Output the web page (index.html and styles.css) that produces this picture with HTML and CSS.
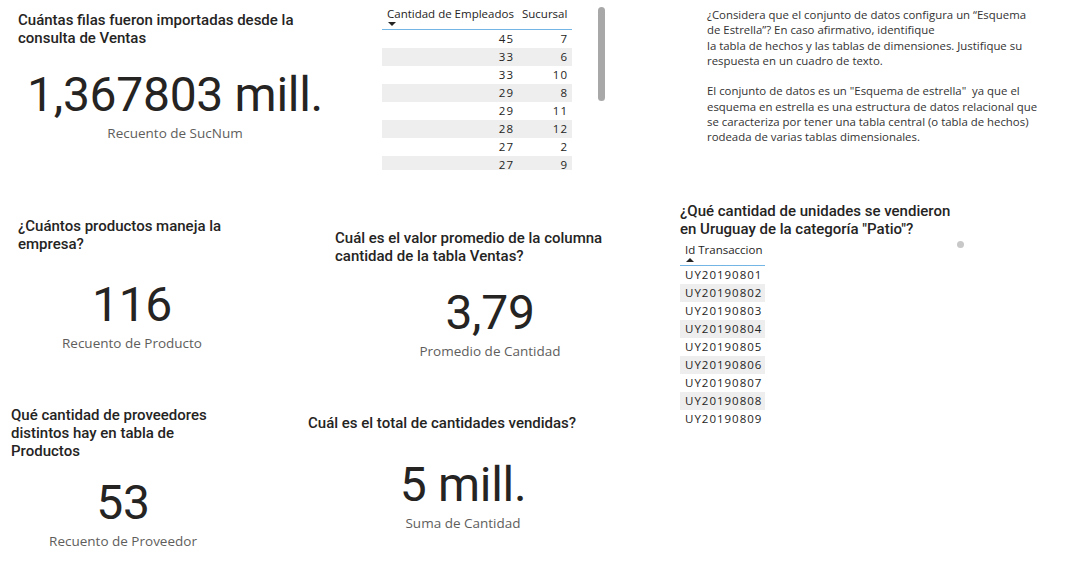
FILE: index.html
```html
<!DOCTYPE html>
<html lang="es">
<head>
<meta charset="utf-8">
<title>Informe</title>
<link rel="stylesheet" href="styles.css">
</head>
<body>
<div class="canvas">

  <div class="visual card card-ventas">
    <div class="card-title">Cuántas filas fueron importadas desde la<br>consulta de Ventas</div>
    <div class="card-value">1,367803 mill.</div>
    <div class="card-label">Recuento de SucNum</div>
  </div>

  <div class="visual table table-emp">
    <div class="grid grid-emp">
      <div class="th">Cantidad de Empleados<span class="sort sort-down"></span></div>
      <div class="th">Sucursal</div>
      <div class="td">45</div><div class="td">7</div>
      <div class="td alt">33</div><div class="td alt">6</div>
      <div class="td">33</div><div class="td">10</div>
      <div class="td alt">29</div><div class="td alt">8</div>
      <div class="td">29</div><div class="td">11</div>
      <div class="td alt">28</div><div class="td alt">12</div>
      <div class="td">27</div><div class="td">2</div>
      <div class="td alt">27</div><div class="td alt">9</div>
    </div>
  </div>
  <div class="scrollbar"></div>

  <div class="visual textbox">
    <p>¿Considera que el conjunto de datos configura un “Esquema<br>de Estrella”? En caso afirmativo, identifique<br>la tabla de hechos y las tablas de dimensiones. Justifique su<br>respuesta en un cuadro de texto.</p>
    <p>El conjunto de datos es un "Esquema de estrella"&nbsp; ya que el<br>esquema en estrella es una estructura de datos relacional que<br>se caracteriza por tener una tabla central (o tabla de hechos)<br>rodeada de varias tablas dimensionales.</p>
  </div>

  <div class="visual card card-productos">
    <div class="card-title">¿Cuántos productos maneja la<br>empresa?</div>
    <div class="card-value">116</div>
    <div class="card-label">Recuento de Producto</div>
  </div>

  <div class="visual card card-promedio">
    <div class="card-title">Cuál es el valor promedio de la columna<br>cantidad de la tabla Ventas?</div>
    <div class="card-value">3,79</div>
    <div class="card-label">Promedio de Cantidad</div>
  </div>

  <div class="visual table table-trans">
    <div class="card-title table-title">¿Qué cantidad de unidades se vendieron<br>en Uruguay de la categoría "Patio"?</div>
    <div class="grid grid-trans">
      <div class="th">Id Transaccion<span class="sort sort-up"></span></div>
      <div class="td left">UY20190801</div>
      <div class="td left alt">UY20190802</div>
      <div class="td left">UY20190803</div>
      <div class="td left alt">UY20190804</div>
      <div class="td left">UY20190805</div>
      <div class="td left alt">UY20190806</div>
      <div class="td left">UY20190807</div>
      <div class="td left alt">UY20190808</div>
      <div class="td left">UY20190809</div>
    </div>
  </div>
  <div class="dot"></div>

  <div class="visual card card-proveedores">
    <div class="card-title">Qué cantidad de proveedores<br>distintos hay en tabla de<br>Productos</div>
    <div class="card-value">53</div>
    <div class="card-label">Recuento de Proveedor</div>
  </div>

  <div class="visual card card-total">
    <div class="card-title">Cuál es el total de cantidades vendidas?</div>
    <div class="card-value">5 mill.</div>
    <div class="card-label">Suma de Cantidad</div>
  </div>

</div>
</body>
</html>
```

FILE: styles.css
```css
* { box-sizing: border-box; }

html, body {
  margin: 0;
  padding: 0;
  background: #ffffff;
}

body {
  width: 1071px;
  height: 577px;
  overflow: hidden;
  font-family: "Open Sans", "Noto Sans", sans-serif;
  color: #252423;
}

.canvas {
  position: relative;
  width: 1071px;
  height: 577px;
}

.visual {
  position: absolute;
}

/* ---------- cards ---------- */
.card {
  display: flex;
  flex-direction: column;
}

.card-title {
  padding-left: 8px;
  font-family: Roboto, "Liberation Sans", sans-serif;
  font-weight: 500;
  font-size: 15px;
  line-height: 18px;
  color: #252423;
  white-space: nowrap;
}

.card-value {
  text-align: center;
  font-family: Roboto, "Liberation Sans", sans-serif;
  font-weight: 400;
  font-size: 48px;
  line-height: 48px;
  letter-spacing: -0.3px;
  color: #252423;
  white-space: nowrap;
}

.card-label {
  margin-top: 5px;
  text-align: center;
  font-family: "Open Sans", "Noto Sans", sans-serif;
  font-size: 13.5px;
  line-height: 18px;
  color: #605e5c;
  white-space: nowrap;
}

.card-ventas { left: 10px; top: 11px; width: 330px; }
.card-ventas .card-value { margin-top: 24px; }

.card-productos { left: 10px; top: 217px; width: 244px; }
.card-productos .card-value { margin-top: 28px; }

.card-promedio { left: 327px; top: 229px; width: 326px; }
.card-promedio .card-value { margin-top: 24px; }

.card-proveedores { left: 3px; top: 406px; width: 240px; }
.card-proveedores .card-value { margin-top: 19px; }

.card-total { left: 300px; top: 414px; width: 326px; }
.card-total .card-value { margin-top: 29px; }

/* ---------- tables ---------- */
.table {
  font-family: "Open Sans", "Noto Sans", sans-serif;
  font-size: 11.5px;
  color: #252423;
}

.grid {
  display: grid;
  grid-auto-rows: 18px;
  grid-template-rows: 25px;
  align-content: start;
  overflow: hidden;
}

.th {
  position: relative;
  height: 25px;
  padding: 1px 0 0 5px;
  line-height: 16px;
  white-space: nowrap;
  border-bottom: 1px solid #73b6e6;
}

.sort {
  position: absolute;
  left: 6px;
  top: 17px;
  width: 0;
  height: 0;
  border-left: 4px solid transparent;
  border-right: 4px solid transparent;
}

.sort-down { border-top: 4px solid #252423; }
.sort-up { border-bottom: 4px solid #252423; }

.td {
  height: 18px;
  line-height: 18px;
  text-align: right;
  padding-right: 3px;
  letter-spacing: 1px;
  white-space: nowrap;
}

.td.left {
  text-align: left;
  padding: 0 0 0 5px;
}

.td.alt { background: #eeeeee; }

.table-emp { left: 382px; top: 5px; }
.grid-emp {
  grid-template-columns: 135px 55px;
  height: 165px;
}
.grid-emp .td:nth-child(even) { padding-right: 4px; }

.table-trans { left: 680px; top: 202px; }
.table-trans .table-title { padding-left: 0; }
.grid-trans {
  grid-template-columns: 85px;
  height: 184px;
  margin-top: 3px;
}

.scrollbar {
  position: absolute;
  left: 598px;
  top: 7px;
  width: 7px;
  height: 94px;
  border-radius: 4px;
  background: #a8a8a8;
}

.dot {
  position: absolute;
  left: 957px;
  top: 241px;
  width: 7px;
  height: 7px;
  border-radius: 50%;
  background: #c8c8c8;
}

/* ---------- text box ---------- */
.textbox {
  left: 707px;
  top: 7px;
  font-family: "Open Sans", "Noto Sans", sans-serif;
  font-size: 11.4px;
  line-height: 15.25px;
  color: #333333;
  white-space: nowrap;
}

.textbox p { margin: 0 0 15.25px 0; }
```
